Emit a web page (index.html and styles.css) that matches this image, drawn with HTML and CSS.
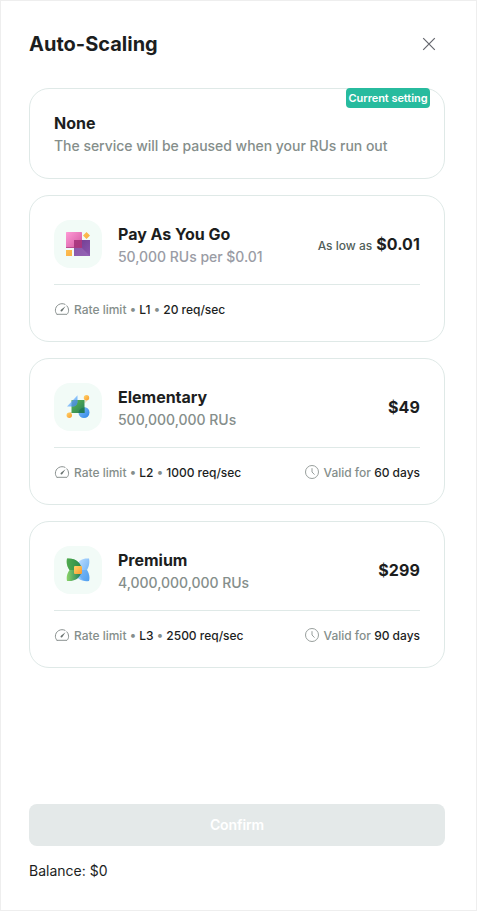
FILE: index.html
```html
<!DOCTYPE html>
<html lang="en">
<head>
<meta charset="utf-8">
<title>Auto-Scaling</title>
<link rel="stylesheet" href="styles.css">
</head>
<body>
<svg width="0" height="0" class="defs" aria-hidden="true">
  <defs>
    <linearGradient id="pink" x1="0" y1="0" x2="1" y2="1"><stop offset="0" stop-color="#ff9ad6"/><stop offset="1" stop-color="#d0569f"/></linearGradient>
    <linearGradient id="purple" x1="0" y1="0" x2="1" y2="1"><stop offset="0" stop-color="#6b3a8c"/><stop offset="1" stop-color="#8d57b0"/></linearGradient>
    <linearGradient id="gold" x1="0" y1="0" x2="1" y2="1"><stop offset="0" stop-color="#ffd36a"/><stop offset="1" stop-color="#f99b2c"/></linearGradient>
    <linearGradient id="blue" x1="0" y1="0" x2="1" y2="1"><stop offset="0" stop-color="#82bdf8"/><stop offset="1" stop-color="#2f86e8"/></linearGradient>
    <linearGradient id="sky" x1="0" y1="0" x2="1" y2="1"><stop offset="0" stop-color="#c5e2ff"/><stop offset="1" stop-color="#5aa7f5"/></linearGradient>
    <linearGradient id="green" x1="0" y1="0" x2="1" y2="1"><stop offset="0" stop-color="#5fb950"/><stop offset="1" stop-color="#277f58"/></linearGradient>
    <linearGradient id="leaf" x1="0" y1="0" x2="1" y2="0"><stop offset="0" stop-color="#8bd468"/><stop offset="1" stop-color="#1c7a5c"/></linearGradient>
    <symbol id="gauge" viewBox="0 0 16 16"><path d="M3 13.300h10c1-1 1.600-2.400 1.600-4.100a6.600 6.600 0 0 0-1.700-4.400M11 3.300A6.600 6.600 0 0 0 1.400 9.200c0 1.700.6 3.100 1.600 4.100" fill="none" stroke="#7d8583" stroke-linecap="round" stroke-linejoin="round" stroke-width=".9"/><path d="M6.800 10.200c-.5-.6-.3-1.300.4-1.800L11.500 5.300 8.700 9.600c-.5.800-1.300 1.200-1.900.6Z" fill="#68716f"/></symbol>
    <symbol id="clock" viewBox="0 0 16 16"><circle cx="8" cy="8" r="6.500" fill="none" stroke="#8d9492" stroke-width=".9"/><path d="M8 4.200V8l2.500 2.600" fill="none" stroke="#969d9b"/></symbol>
  </defs>
</svg>
<main class="drawer">
  <header class="header">
    <h1>Auto-Scaling</h1>
    <button class="close" aria-label="Close"><svg width="14" height="14" viewBox="0 0 14 14"><path d="M1.200 1.200l11.600 11.600M12.800 1.200L1.200 12.800" stroke="#64666d" stroke-width="1.200"/></svg></button>
  </header>
  <section class="plans">
    <article class="card none">
      <span class="badge">Current setting</span>
      <h2>None</h2>
      <p>The service will be paused when your RUs run out</p>
    </article>
    <article class="card">
      <div class="summary">
        <div class="icon"><svg width="24" height="24" viewBox="0 0 24 24"><path fill="url(#gold)" d="M20.500 0l3.500 3.500L20.500 7 17 3.500ZM0 18h6v6H0Z"/><path fill="url(#purple)" d="M8 8h16v16H8Z"/><path fill="#a070bd" opacity=".5" d="M8 24V8l16 16Z"/><rect width="16" height="16" rx=".5" fill="url(#pink)"/><path fill="#a12f78" opacity=".85" d="M8 8h8v8H8Z"/><path fill="#a83c80" opacity=".7" d="M0 15h16v1H0Z"/></svg></div>
        <div class="name"><h2>Pay As You Go</h2><p class="cool">50,000 RUs per $0.01</p></div>
        <div class="price"><span>As low as</span> $0.01</div>
      </div>
      <div class="details"><div class="detail"><svg width="16" height="16"><use href="#gauge"/></svg><span>Rate limit <i>•</i> <b>L1</b> <i>•</i> <b>20 req/sec</b></span></div></div>
    </article>
    <article class="card">
      <div class="summary">
        <div class="icon"><svg width="24" height="24" viewBox="0 0 24 24"><circle cx="18" cy="17.500" r="5.500" fill="url(#blue)"/><path d="M4 20.500v-3h2M20 4v3h-2" stroke="#edc48a" stroke-width=".6" fill="none"/><rect x="5.500" y="5" width="13" height="13" fill="url(#green)"/><path fill="#1b7656" d="M12.500 18c0-3 2.500-5.500 6-5.600V18Z" opacity=".7"/><path fill="url(#sky)" d="M1 11.500L11.500.3v6.200c0 3-2 5-5 5Z"/><path fill="#286fa5" opacity=".5" d="M5.500 6.800v4.700h1c3 0 5-2 5-5V5H7.200Z"/><circle cx="20.500" cy="2.800" r="2.700" fill="url(#gold)"/><circle cx="3.300" cy="20.200" r="2.700" fill="url(#gold)"/></svg></div>
        <div class="name"><h2>Elementary</h2><p>500,000,000 RUs</p></div>
        <div class="price">$49</div>
      </div>
      <div class="details"><div class="detail"><svg width="16" height="16"><use href="#gauge"/></svg><span>Rate limit <i>•</i> <b>L2</b> <i>•</i> <b>1000 req/sec</b></span></div><div class="detail"><svg width="16" height="16"><use href="#clock"/></svg><span>Valid for <b>60 days</b></span></div></div>
    </article>
    <article class="card">
      <div class="summary">
        <div class="icon"><svg width="24" height="24" viewBox="0 0 24 24"><path fill="url(#sky)" d="M23 .5c.8 4 .2 8-2 11.500 2.200 3.300 3 7 2 11-6 .8-10.500-1-12.500-5V7C12.500 2.500 17-.2 23 .5Z"/><path fill="#4795e8" opacity=".4" d="M12 12h9c2 3.500 2.800 7 2 11-6 .8-10-3-11-11Z"/><path fill="url(#leaf)" d="M1 .5C9-.3 15.500 4.500 15.500 12S9 23.800 1 23c-.8-4 0-7.500 2.500-11C1 8.500.2 5 1 .5Z"/><path fill="#2f9442" opacity=".65" d="M1 .5C9-.3 15.500 4.500 15.500 12h-12C1 8.500.2 5 1 .5Z"/><rect x="8" y="8" width="8" height="8" rx="1" fill="url(#gold)"/></svg></div>
        <div class="name"><h2>Premium</h2><p>4,000,000,000 RUs</p></div>
        <div class="price">$299</div>
      </div>
      <div class="details"><div class="detail"><svg width="16" height="16"><use href="#gauge"/></svg><span>Rate limit <i>•</i> <b>L3</b> <i>•</i> <b>2500 req/sec</b></span></div><div class="detail"><svg width="16" height="16"><use href="#clock"/></svg><span>Valid for <b>90 days</b></span></div></div>
    </article>
  </section>
  <footer class="footer">
    <button class="confirm" disabled>Confirm</button>
    <div class="balance">Balance: $0</div>
  </footer>
</main>
</body>
</html>
```
FILE: styles.css
```css
* { box-sizing: border-box; }
body { margin: 0; font-family: Inter, "Liberation Sans", sans-serif; color: #1c1e1e; }
h1, h2, p { margin: 0; }
button { font-family: inherit; border: 0; padding: 0; }
.defs { position: absolute; }
.drawer { height: 911px; border: 1px solid #eee; background: #fff; padding: 28px 31px 28px 28px; display: flex; flex-direction: column; }
.header { height: 30px; display: flex; align-items: center; justify-content: space-between; padding-right: 9px; }
h1 { font-size: 20px; font-weight: 700; line-height: 30px; }
.close { display: flex; background: none; }
.plans { display: flex; flex-direction: column; gap: 16px; margin-top: 29px; }
.card { position: relative; border: 1px solid #dfe9e7; border-radius: 20px; padding: 24px; }
.none { padding: 23px 24px 25px; }
h2 { font-size: 16px; font-weight: 700; line-height: 22px; letter-spacing: -.01px; }
.card p { font-size: 14px; font-weight: 500; line-height: 19px; padding-top: 2px; margin-bottom: -2px; letter-spacing: -.03px; color: #858e8b; }
.card .cool { color: #9a9ca5; }
.badge { position: absolute; top: -1px; right: 14px; width: 84px; height: 20px; border-radius: 4px; background: #27bb9e; color: #fff; font-size: 11px; font-weight: 600; line-height: 20px; letter-spacing: -.05px; text-align: center; white-space: nowrap; }
.summary { height: 64px; border-bottom: 1px solid #dfe9e7; box-sizing: content-box; display: flex; align-items: flex-start; gap: 16px; }
.icon { width: 48px; height: 48px; border-radius: 16px; background: #f2fbf7; display: flex; align-items: center; justify-content: center; }
.name { flex: 1; padding-top: 3px; }
.price { line-height: 48px; font-size: 16px; font-weight: 700; letter-spacing: .1px; white-space: nowrap; }
.price span { font-size: 12px; font-weight: 450; letter-spacing: 0; color: #515e59; }
.details { height: 32px; padding-top: 16px; display: flex; justify-content: space-between; }
.detail { display: flex; align-items: center; gap: 4px; font-size: 12px; font-weight: 500; line-height: 16px; letter-spacing: -.01px; color: #858e8b; }
.detail span { padding-top: 2px; }
.detail b { color: #1c1e1e; font-weight: 500; }
.detail i { font-style: normal; position: relative; top: -1px; }
.footer { margin-top: auto; height: 78px; }
.confirm { display: block; width: 100%; height: 42px; padding-bottom: 1px; border-radius: 8px; background: #e4e9e9; color: #fff; font-size: 14px; font-weight: 600; letter-spacing: -.1px; }
.balance { font-size: 14px; line-height: 20px; margin-top: 15px; }
```
